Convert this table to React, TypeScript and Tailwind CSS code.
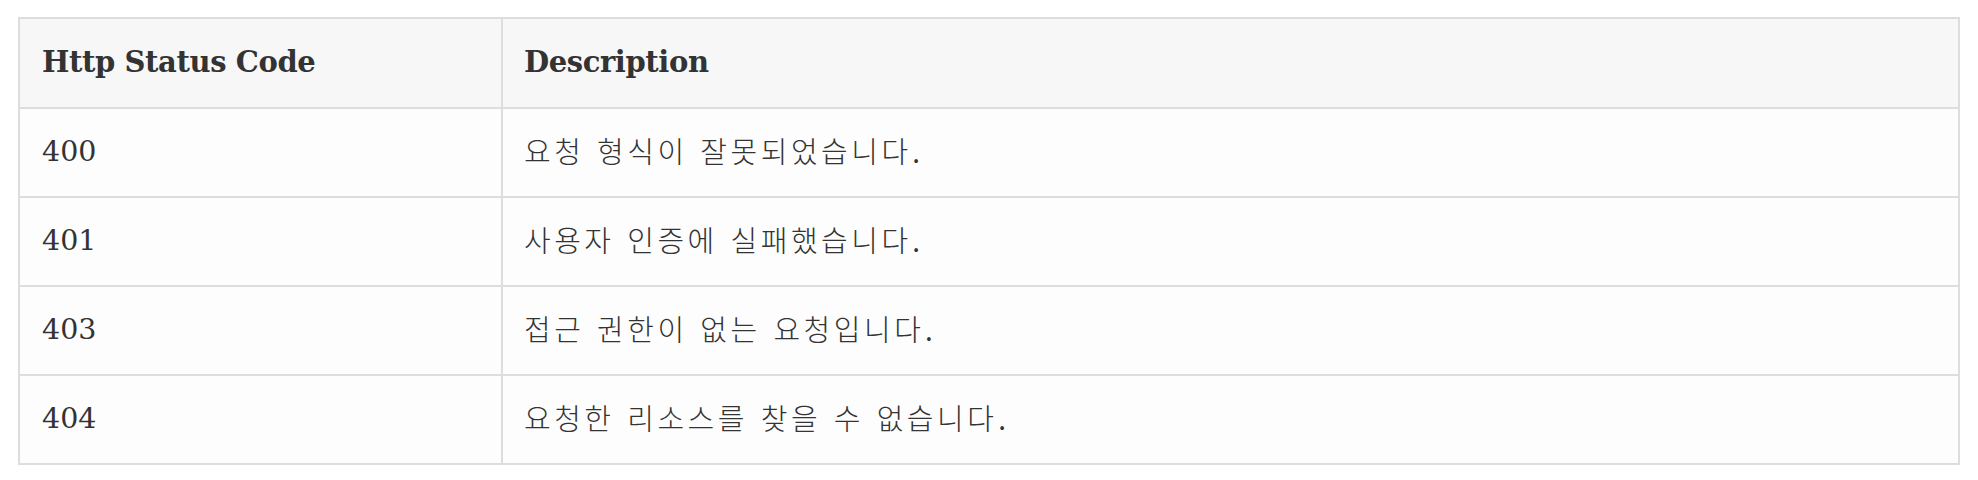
const ROWS = [
  { code: "400", desc: "요청 형식이 잘못되었습니다." },
  { code: "401", desc: "사용자 인증에 실패했습니다." },
  { code: "403", desc: "접근 권한이 없는 요청입니다." },
  { code: "404", desc: "요청한 리소스를 찾을 수 없습니다." },
];

export default function App() {
  return (
    <div className="min-h-[480px] w-[1978px] bg-white pl-[18px] pt-[17px] text-[#333] [font-family:'DejaVu_Serif','Noto_Sans_CJK_KR',serif]">
      <div className="w-[1942px] border-2 border-[#ddd]">
        <div className="grid h-[88px] grid-cols-[483px_1fr] bg-[#f7f7f7] text-[29px] font-bold tracking-[-0.4px]">
          <div className="flex items-center border-r-2 border-[#ddd] px-[22px]">Http Status Code</div>
          <div className="flex items-center px-[21px]">Description</div>
        </div>
        {ROWS.map((r) => (
          <div key={r.code} className="grid h-[89px] grid-cols-[483px_1fr] border-t-2 border-[#ddd] bg-[#fdfdfd]">
            <div className="flex items-center border-r-2 border-[#ddd] px-[22px] text-[28.5px]">{r.code}</div>
            <div className="flex items-center px-[21px] pt-[3px] text-[29px] font-light tracking-[3.5px]">{r.desc}</div>
          </div>
        ))}
      </div>
    </div>
  );
}
